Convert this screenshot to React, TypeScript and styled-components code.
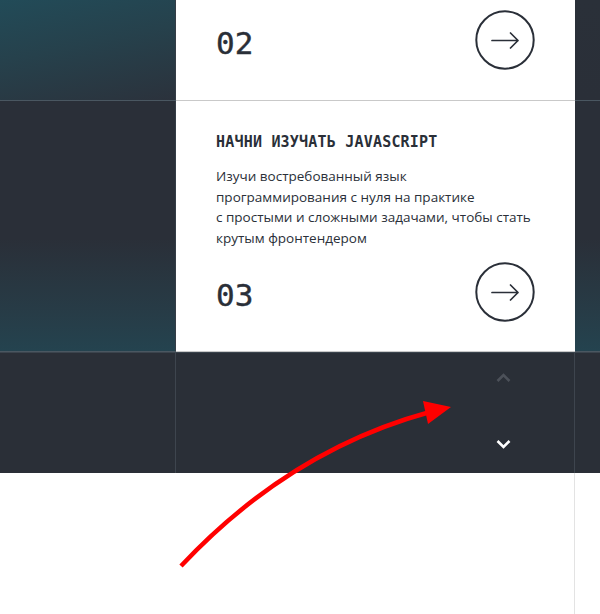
import React from 'react'
import styled, { createGlobalStyle } from 'styled-components'

const GlobalStyle = createGlobalStyle`
  html, body {
    margin: 0;
    padding: 0;
    background: #ffffff;
  }
  body {
    font-family: 'Open Sans', 'Noto Sans', sans-serif;
    color: #2a2f38;
  }
`

const Page = styled.div`
  position: relative;
  width: 600px;
  height: 614px;
  overflow: hidden;
  background: #ffffff;
`

const Row = styled.div<{ $height: number }>`
  display: grid;
  grid-template-columns: 176px 399px 1fr;
  height: ${({ $height }) => $height}px;
  border-bottom: 1px solid #c9c9c9;
  box-sizing: content-box;
`

const sideBackgrounds = {
  top: 'linear-gradient(168deg, #224b58 0%, #26414c 45%, #2b323c 100%)',
  plain: 'linear-gradient(180deg, #2a3039 0%, #2a2f38 100%)',
  bottom: 'linear-gradient(180deg, #2a2f38 0%, #2a2f38 55%, #273c47 85%, #24434f 100%)',
}

const Side = styled.div<{ $variant: keyof typeof sideBackgrounds; $left?: boolean }>`
  box-sizing: border-box;
  border-right: ${({ $left }) => ($left ? '1px solid #353d46' : 'none')};
  background: ${({ $variant }) => sideBackgrounds[$variant]};
  box-shadow: 0 1px 0 #4a5761;
`

const Card = styled.div<{ $top?: number }>`
  background: #ffffff;
  display: flex;
  flex-direction: column;
  padding: ${({ $top }) => $top ?? 30}px 40px 0 40px;
`

const Title = styled.h3`
  margin: 0;
  font-family: 'DejaVu Sans Mono', 'Liberation Mono', monospace;
  font-weight: 700;
  font-size: 15px;
  line-height: 20px;
  letter-spacing: 0.2px;
  color: #2a2f38;
`

const Description = styled.p`
  margin: 14px 0 0 0;
  font-family: 'Open Sans', 'Noto Sans', sans-serif;
  font-size: 13.5px;
  line-height: 20.5px;
  color: #2a2f38;
`

const CardFooter = styled.div<{ $gap?: number }>`
  display: flex;
  align-items: center;
  justify-content: space-between;
  margin-top: ${({ $gap }) => $gap ?? 0}px;
`

const Num = styled.span`
  font-family: 'DejaVu Sans Mono', 'Liberation Mono', monospace;
  font-size: 31px;
  line-height: 40px;
  color: #2a2f38;
  padding-top: 6px;
  -webkit-text-stroke: 0.4px #2a2f38;
`

const RoundButton = styled.button`
  width: 60px;
  height: 60px;
  padding: 0;
  border: none;
  background: none;
  cursor: pointer;
  display: block;
`

const Band = styled.div`
  display: grid;
  grid-template-columns: 176px 399px 1fr;
  height: 120px;
  background: #2a2f37;
  border-top: 1px solid #3b444d;
`

const BandCell = styled.div<{ $line?: boolean }>`
  box-sizing: border-box;
  border-right: ${({ $line }) => ($line ? '1px solid #3e454e' : 'none')};
  display: flex;
  justify-content: flex-end;
`

const Controls = styled.div`
  display: flex;
  flex-direction: column;
  align-items: center;
  gap: 42px;
  padding-top: 13px;
  margin-right: 59px;
`

const Chevron = styled.button<{ $active?: boolean }>`
  width: 24px;
  height: 24px;
  padding: 0;
  border: none;
  background: none;
  color: ${({ $active }) => ($active ? '#ffffff' : '#4c5159')};
  display: flex;
  align-items: center;
  justify-content: center;
`

const Bottom = styled.div`
  display: grid;
  grid-template-columns: 176px 399px 1fr;
  height: 142px;
`

const BottomCell = styled.div<{ $line?: boolean }>`
  box-sizing: border-box;
  border-right: ${({ $line }) => ($line ? '1px solid #e3e3e3' : 'none')};
`

const Pointer = styled.svg`
  position: absolute;
  left: 0;
  top: 0;
  pointer-events: none;
`

const ArrowCircle = () => (
  <svg width="60" height="60" viewBox="0 0 60 60" fill="none">
    <circle cx="30" cy="30" r="28.7" stroke="#2a2f38" strokeWidth="2" />
    <path
      d="M17 30.5H43M35.5 23L43 30.5L35.5 38"
      stroke="#2a2f38"
      strokeWidth="1.7"
      strokeLinecap="round"
      strokeLinejoin="round"
    />
  </svg>
)

const ChevronIcon = ({ up }: { up?: boolean }) => (
  <svg width="15" height="10" viewBox="0 0 15 10" fill="none">
    <path
      d={up ? 'M1.5 8L7.5 2L13.5 8' : 'M1.5 2L7.5 8L13.5 2'}
      stroke="currentColor"
      strokeWidth="2.6"
    />
  </svg>
)

export default function App() {
  return (
    <Page>
      <GlobalStyle />
      <Row $height={100}>
        <Side $variant="top" $left />
        <Card $top={10}>
          <CardFooter>
            <Num>02</Num>
            <RoundButton aria-label="next">
              <ArrowCircle />
            </RoundButton>
          </CardFooter>
        </Card>
        <Side $variant="plain" />
      </Row>
      <Row $height={250}>
        <Side $variant="bottom" $left />
        <Card $top={31}>
          <Title>НАЧНИ ИЗУЧАТЬ JAVASCRIPT</Title>
          <Description>
            Изучи востребованный язык
            <br />
            программирования с нуля на практике
            <br />
            с простыми и сложными задачами, чтобы стать
            <br />
            крутым фронтендером
          </Description>
          <CardFooter $gap={14}>
            <Num>03</Num>
            <RoundButton aria-label="next">
              <ArrowCircle />
            </RoundButton>
          </CardFooter>
        </Card>
        <Side $variant="bottom" />
      </Row>
      <Band>
        <BandCell $line />
        <BandCell $line>
          <Controls>
            <Chevron aria-label="up">
              <ChevronIcon up />
            </Chevron>
            <Chevron $active aria-label="down">
              <ChevronIcon />
            </Chevron>
          </Controls>
        </BandCell>
        <BandCell />
      </Band>
      <Bottom>
        <BottomCell />
        <BottomCell $line />
        <BottomCell />
      </Bottom>
      <Pointer width="600" height="614" viewBox="0 0 600 614">
        <path
          d="M181 566Q290 450 430 412"
          stroke="#ff0000"
          strokeWidth="4.5"
          fill="none"
        />
        <path d="M423 401L451 407L428 424Z" fill="#ff0000" />
      </Pointer>
    </Page>
  )
}
